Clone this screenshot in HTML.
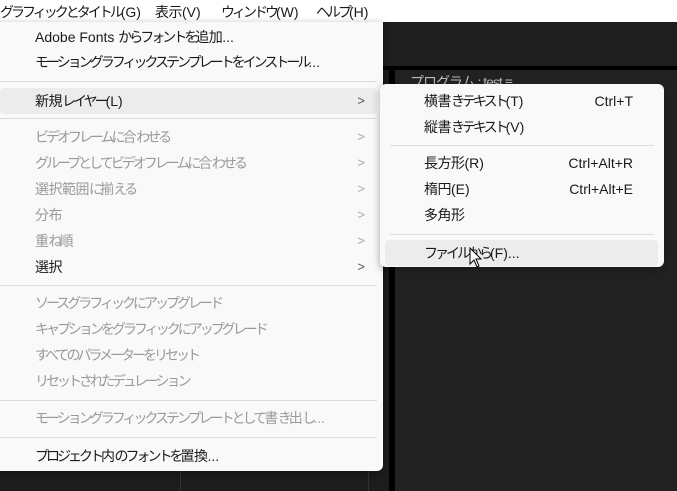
<!DOCTYPE html>
<html><head><meta charset="utf-8"><style>
*{margin:0;padding:0;box-sizing:border-box}
body{width:677px;height:491px;overflow:hidden;position:relative;background:#1c1c1c;font-family:"Liberation Sans","Noto Sans CJK JP",sans-serif;font-size:14px;color:#1a1a1a}
.bar{position:absolute;left:0;top:0;width:677px;height:22px;background:#fff}
.bar span.m{position:absolute;top:2px;font-size:14px;letter-spacing:-3px;white-space:nowrap}
.abs{position:absolute}
.menu{position:absolute;background:#f9f9f9;border-radius:6px;box-shadow:0 2px 8px rgba(0,0,0,.35)}
.it{position:absolute;left:0;right:0;height:26px;line-height:26px;white-space:nowrap}
.it .t{position:absolute;letter-spacing:-3px}
.l{letter-spacing:0}
.k{letter-spacing:-0.5px}
.it .s{position:absolute;letter-spacing:0}
.dis{color:#9a9a9a}
.sep{position:absolute;height:1px;background:#dcdcdc}
.arr{position:absolute;right:18px;font-size:13px;color:#555}
.hl{position:absolute;background:#ececec;border-radius:4px}
</style></head><body>
<div class="bar">
<span class="m" style="left:0">グラフィックとタイトル<span class="l">(G)</span></span>
<span class="m" style="left:155px"><span class="k">表示</span><span class="l">(V)</span></span>
<span class="m" style="left:221px">ウィンドウ<span class="l">(W)</span></span>
<span class="m" style="left:316px">ヘルプ<span class="l">(H)</span></span>
</div>
<div class="abs" style="left:383px;top:22px;width:294px;height:44px;background:#1e1e1e"></div>
<div class="abs" style="left:383px;top:66px;width:294px;height:4px;background:#000"></div>
<div class="abs" style="left:389px;top:66px;width:6px;height:425px;background:#000"></div>
<div class="abs" style="left:395px;top:70px;width:282px;height:421px;background:#222"></div>
<div class="abs" style="left:410px;top:72px;color:#bbb;font-size:14px;letter-spacing:-1px;white-space:nowrap">プログラム : test ≡</div>
<div class="abs" style="left:180px;top:470px;width:1px;height:21px;background:#333"></div>
<div class="abs" style="left:368px;top:470px;width:1px;height:21px;background:#333"></div>

<div class="menu" style="left:-6px;top:22px;width:389px;height:449px;border-radius:0 0 6px 0">
<div class="it" style="top:2px"><span class="t" style="left:41px"><span class="l">Adobe Fonts </span>からフォントを<span class="k">追加</span><span class="l">...</span></span></div>
<div class="it" style="top:27px"><span class="t" style="left:41px">モーショングラフィックステンプレートをインストール<span class="l">...</span></span></div>
<div class="sep" style="left:6px;right:6px;top:59px"></div>
<div class="hl" style="left:6px;right:6px;top:66px;height:26px"></div>
<div class="it" style="top:66px"><span class="t" style="left:41px"><span class="k">新規</span>レイヤー<span class="l">(L)</span></span><span class="arr">&gt;</span></div>
<div class="sep" style="left:6px;right:6px;top:96px"></div>
<div class="it dis" style="top:102px"><span class="t" style="left:41px">ビデオフレームに<span class="k">合</span>わせる</span><span class="arr" style="color:#aaa">&gt;</span></div>
<div class="it dis" style="top:128px"><span class="t" style="left:41px">グループとしてビデオフレームに<span class="k">合</span>わせる</span><span class="arr" style="color:#aaa">&gt;</span></div>
<div class="it dis" style="top:154px"><span class="t" style="left:41px"><span class="k">選択範囲</span>に<span class="k">揃</span>える</span><span class="arr" style="color:#aaa">&gt;</span></div>
<div class="it dis" style="top:180px"><span class="t" style="left:41px"><span class="k">分布</span></span><span class="arr" style="color:#aaa">&gt;</span></div>
<div class="it dis" style="top:206px"><span class="t" style="left:41px"><span class="k">重</span>ね<span class="k">順</span></span><span class="arr" style="color:#aaa">&gt;</span></div>
<div class="it" style="top:232px"><span class="t" style="left:41px"><span class="k">選択</span></span><span class="arr">&gt;</span></div>
<div class="sep" style="left:6px;right:6px;top:263px"></div>
<div class="it dis" style="top:268px"><span class="t" style="left:41px">ソースグラフィックにアップグレード</span></div>
<div class="it dis" style="top:294px"><span class="t" style="left:41px">キャプションをグラフィックにアップグレード</span></div>
<div class="it dis" style="top:320px"><span class="t" style="left:41px">すべてのパラメーターをリセット</span></div>
<div class="it dis" style="top:346px"><span class="t" style="left:41px">リセットされたデュレーション</span></div>
<div class="sep" style="left:6px;right:6px;top:378px"></div>
<div class="it dis" style="top:383px"><span class="t" style="left:41px">モーショングラフィックステンプレートとして<span class="k">書</span>き<span class="k">出</span>し<span class="l">...</span></span></div>
<div class="sep" style="left:6px;right:6px;top:415px"></div>
<div class="it" style="top:421px"><span class="t" style="left:41px">プロジェクト<span class="k">内</span>のフォントを<span class="k">置換</span><span class="l">...</span></span></div>
</div>

<div class="menu" style="left:380px;top:84px;width:284px;height:183px">
<div class="it" style="top:4px"><span class="t" style="left:44px"><span class="k">横書</span>きテキスト<span class="l">(T)</span></span><span class="s" style="right:31px">Ctrl+T</span></div>
<div class="it" style="top:30px"><span class="t" style="left:44px"><span class="k">縦書</span>きテキスト<span class="l">(V)</span></span></div>
<div class="sep" style="left:10px;right:10px;top:61px"></div>
<div class="it" style="top:66px"><span class="t" style="left:44px"><span class="k">長方形</span><span class="l">(R)</span></span><span class="s" style="right:31px">Ctrl+Alt+R</span></div>
<div class="it" style="top:92px"><span class="t" style="left:44px"><span class="k">楕円</span><span class="l">(E)</span></span><span class="s" style="right:31px">Ctrl+Alt+E</span></div>
<div class="it" style="top:118px"><span class="t" style="left:44px"><span class="k">多角形</span></span></div>
<div class="sep" style="left:10px;right:10px;top:150px"></div>
<div class="hl" style="left:5px;right:6px;top:156px;height:26px"></div>
<div class="it" style="top:156px"><span class="t" style="left:44px">ファイルから<span class="l">(F)...</span></span></div>
</div>
<svg class="abs" style="left:469px;top:247px" width="14" height="22" viewBox="0 0 14 22"><path d="M1 1 L1 17 L5 13 L8 20 L10 19 L7 12 L12 12 Z" fill="#fff" stroke="#000" stroke-width="1"/></svg>
</body></html>
